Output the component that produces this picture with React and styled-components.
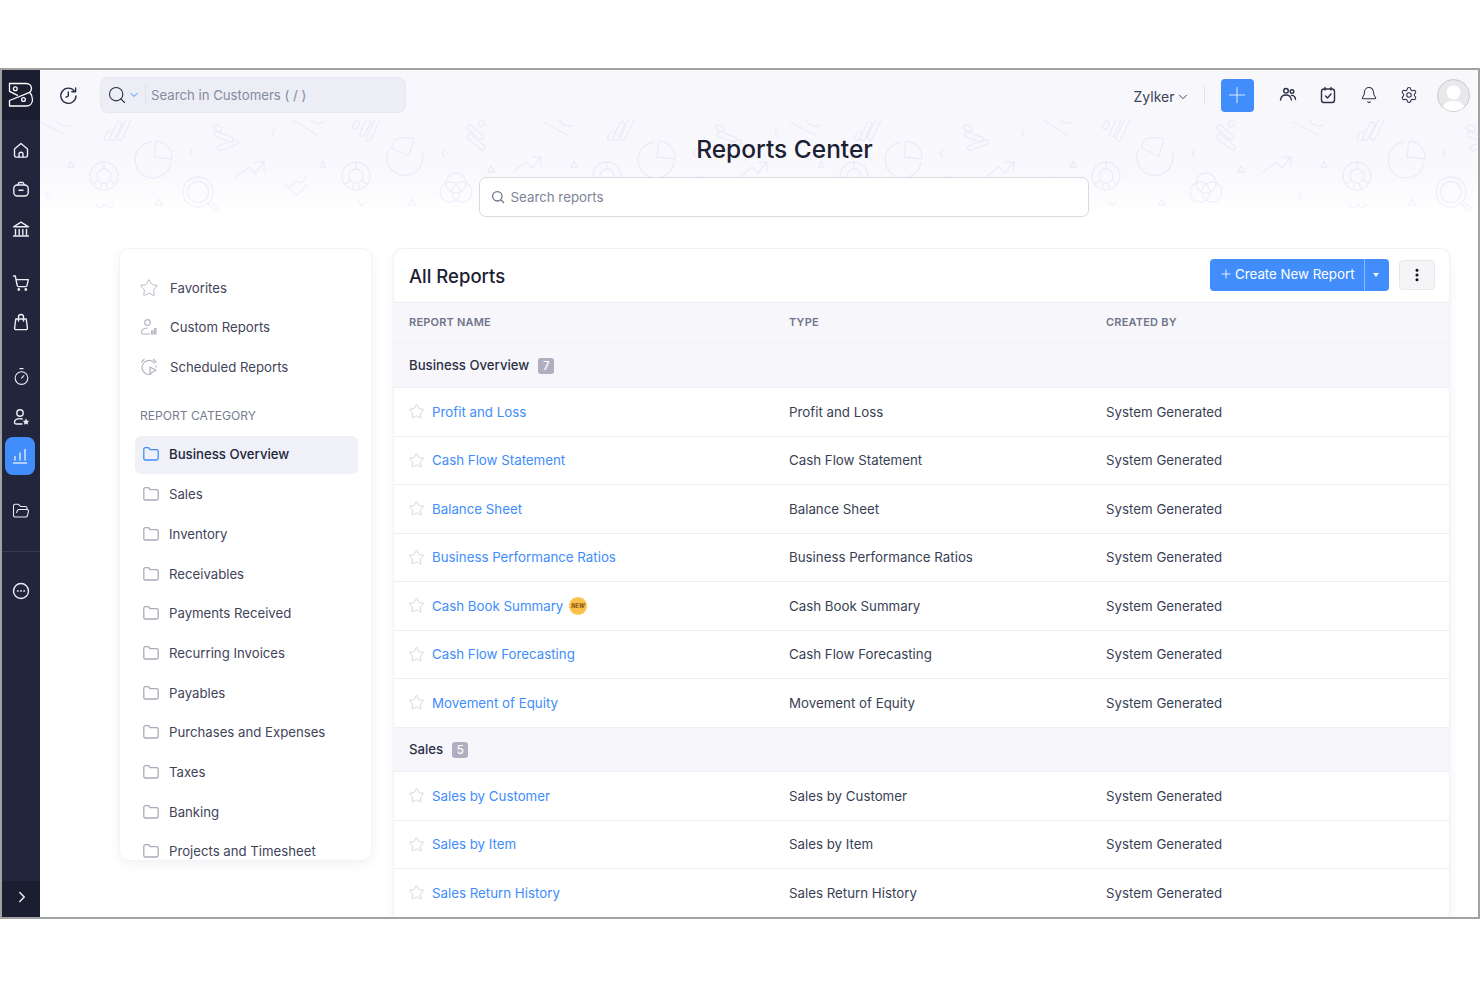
import React from "react";
import styled, { createGlobalStyle } from "styled-components";
import { Timer, FolderOpen, ChevronRight, ChevronDown, Search, Plus, Bell, Settings, Star, EllipsisVertical } from "lucide-react";

const Global = createGlobalStyle`
  html, body { margin: 0; padding: 0; background: #fff; }
  body { font-family: Inter, "Noto Sans", "Liberation Sans", sans-serif; color: #21263c; }
  * { box-sizing: border-box; }
`;

const Frame = styled.div`
  margin-top: 68px; width: 1480px; height: 851px;
  border: 2px solid #a2a2a2;
  display: flex; overflow: hidden; background: #fff;
`;
const Rail = styled.nav`
  width: 38px; flex: none; background: #21263c; display: flex; flex-direction: column; color: #eceef4;
`;
const LogoBlock = styled.div`
  height: 50px; background: #1a1e30; display: flex; align-items: center; justify-content: center; flex: none;
`;
const RailGroup = styled.div`
  display: flex; flex-direction: column; align-items: center; padding-top: ${p => p.$top}px; gap: ${p => p.$gap || 0}px;
`;
const RailItem = styled.div`
  width: ${p => (p.$active ? 30 : 38)}px; height: ${p => (p.$active ? 38 : 39.6)}px; display: flex; align-items: center; justify-content: center;
  ${p => p.$active && "background: #408dfb; border-radius: 8px; margin-left: -2px;"}
`;
const RailDivider = styled.div`
  height: 1px; background: #34394f; margin-top: 20px;
`;
const RailExpand = styled.div`
  margin-top: auto; height: 36px; background: #1a1e30; display: flex; align-items: center; justify-content: center; padding: 0 0 4px 2px;
`;

const Main = styled.div`
  flex: 1; min-width: 0; display: flex; flex-direction: column;
`;
const Topbar = styled.header`
  height: 50px; flex: none; background: #f7f7fc; display: flex; align-items: center; padding-left: 18px; padding-right: 8px;
`;
const IconTool = styled.button`
  width: 20px; height: 20px; padding: 0; border: 0; background: none; color: #2b2f45; display: flex; align-items: center; justify-content: center;
`;
const GlobalSearch = styled.div`
  width: 306px; height: 36px; margin-left: 22px; background: #ecedf5; border: 1px solid #e6e7f1; border-radius: 8px;
  display: flex; align-items: center; padding-left: 6px; color: #2b2f45;
`;
const SearchChevron = styled(ChevronDown)`
  margin-left: 1px; color: #408dfb; flex: none;
`;
const SearchSep = styled.span`
  width: 1px; height: 20px; background: #e0e1ec; margin: 0 5px;
`;
const GlobalPlaceholder = styled.span`
  font-size: 13.2px; color: #858aa0;
`;
const TopRight = styled.div`
  margin-left: auto; display: flex; align-items: center;
`;
const OrgName = styled.span`
  font-size: 14px; color: #3d4257; display: flex; align-items: center; gap: 1px; padding-top: 3px;
`;
const OrgChevron = styled(ChevronDown)`
  color: #2b2f45; flex: none;
`;
const TopSep = styled.span`
  width: 1px; height: 20px; background: #e3e4ee; margin: 0 16px 0 14px;
`;
const AddButton = styled.button`
  width: 33px; height: 33px; background: #408dfb; border: 0; padding: 0; border-radius: 4px; color: #dbe9ff;
  display: flex; align-items: center; justify-content: center; margin-right: 24px;
`;
const ToolRow = styled.div`
  display: flex; align-items: center; gap: 20.5px; margin-right: 18px;
`;
const Avatar = styled.div`
  width: 33px; height: 33px; border-radius: 50%; background: #e9e9ec; border: 1px solid #c9c9cf; overflow: hidden; display: flex;
`;

const Hero = styled.section`
  position: relative; flex: none; height: 128px; padding: 14px 28px 0 79px;
  background: linear-gradient(#f8f8fc 0, #f9f9fd 50px, #fff 98px);
  display: flex; flex-direction: column; align-items: center;
`;
const PatternLayer = styled.svg`
  position: absolute; left: 0; top: 0; width: 100%; height: 100px;
  -webkit-mask-image: linear-gradient(#000 50%, rgba(0,0,0,.45) 100%);
  mask-image: linear-gradient(#000 50%, rgba(0,0,0,.45) 100%);
`;
const Title = styled.h1`
  position: relative; margin: 0; font-size: 24.5px; line-height: 30px; font-weight: 500; color: #1c2033;
`;
const HeroSearch = styled.div`
  position: relative; margin: 13px 2px 0 0; width: 610px; height: 40px; background: #fff; border: 1px solid #d9d9e2; border-radius: 7px;
  display: flex; align-items: center; padding-left: 11px; gap: 6px; font-size: 13.3px; color: #7f8396;
`;

const Content = styled.div`
  flex: 1; min-height: 0; display: flex; align-items: flex-start; gap: 21px; padding: 0 28px 0 79px;
`;
const SideCard = styled.aside`
  width: 253px; height: 613px; flex: none; overflow: hidden; background: #fff; border: 1px solid #f3f3f9; border-radius: 10px;
  box-shadow: 0 3px 12px rgba(40,40,90,.06); padding: 19px 13px 0 15px;
`;
const QuickItem = styled.div`
  height: 39.5px; display: flex; align-items: center; gap: 12px; padding-left: 5px; font-size: 13.2px; color: #3f445a;
`;
const QuickStar = styled(Star)`
  width: 20px; height: 20px; margin: 0 -1px 0 -1px; color: #b3b5c1; flex: none;
`;
const CategoryLabel = styled.div`
  margin-top: 20px; margin-bottom: 11px; padding-left: 5px; font-size: 12.1px; line-height: 18px; color: #777c90;
`;
const CategoryItem = styled.div`
  height: ${p => (p.$active ? "38px" : "39.7px")}; margin-bottom: ${p => (p.$active ? "1.4px" : "0")};
  display: flex; align-items: center; gap: 10px; padding: 0 0 1px 8px; font-size: 13.2px; border-radius: 6px;
  color: ${p => (p.$active ? "#21263c" : "#3f445a")};
  background: ${p => (p.$active ? "#f0f0f8" : "transparent")};
  font-weight: ${p => (p.$active ? 500 : 400)};
  & svg { color: ${p => (p.$active ? "#408dfb" : "#a9abb8")}; flex: none; }
`;

const Panel = styled.section`
  width: 1057px; flex: none; height: 680px; background: #fff; border: 1px solid #f1f1f7; border-bottom: 0; border-radius: 10px 10px 0 0;
  box-shadow: 0 3px 12px rgba(40,40,90,.05); overflow: hidden;
`;
const PanelHead = styled.div`
  height: 54px; display: flex; align-items: center; padding: 0 14px 0 15px; border-bottom: 1px solid #ececf4;
`;
const PanelTitle = styled.h2`
  margin: 0; font-size: 18.5px; font-weight: 500; color: #1c2033;
`;
const PanelActions = styled.div`
  margin-left: auto; display: flex; align-items: center; gap: 10px;
`;
const SplitButton = styled.div`
  height: 32px; width: 179px; display: flex; background: #408dfb; border-radius: 4px; color: #fff; font-size: 13.3px; margin-top: -2px;
`;
const SplitMain = styled.div`
  flex: 1; display: flex; align-items: center; gap: 2px; padding: 0 0 2px 9px; white-space: nowrap;
`;
const SplitCaret = styled.div`
  width: 25px; flex: none; border-left: 1px solid #8dbafc; display: flex; align-items: center; justify-content: center; padding-right: 2px;
`;
const Caret = styled.span`
  width: 0; height: 0; border-left: 3.5px solid transparent; border-right: 3.5px solid transparent; border-top: 4px solid #fff;
`;
const MoreButton = styled.div`
  width: 36px; height: 30px; margin-top: -2px; background: #f5f5f7; border: 1px solid #e7e7ed; border-radius: 4px; display: flex; align-items: center; justify-content: center; color: #111;
`;
const Row = styled.div`
  display: grid; grid-template-columns: 380px 317px 1fr; align-items: center; padding-left: 15px;
`;
const ColumnHead = styled(Row)`
  height: 40px; background: #f7f7fb; border-bottom: 1px solid #f0f0f6; font-size: 11px; font-weight: 600; color: #70758a; letter-spacing: .2px; padding-bottom: 1px;
`;
const GroupRow = styled.div`
  height: ${p => p.$h}px; background: #f7f7fb; border-bottom: 1px solid #efeff5; display: flex; align-items: center; gap: 9px; padding: 0 0 1px 15px; font-size: 13.2px; font-weight: 500; color: #2c3046;
`;
const CountBadge = styled.span`
  width: 16px; height: 16px; border-radius: 3px; background: #afafbf; color: #fff; font-size: 11.5px; font-weight: 500; display: flex; align-items: center; justify-content: center; margin-top: 2px;
`;
const ReportRow = styled(Row)`
  height: 48.5px; border-bottom: 1px solid #eeeef3; font-size: 13.3px; color: #3a3f55;
`;
const NameCell = styled.div`
  display: flex; align-items: center; color: #408dfb; gap: 7px;
  & > svg:first-child { color: #cfcfd6; flex: none; margin-left: -1px; }
`;
const NewMark = styled.svg`
  margin-left: -2px; flex: none;
`;

const LogoIcon = () => (
  <svg width="26" height="26" viewBox="0 0 26 26" fill="none" stroke="#fff" strokeWidth="1.3" strokeLinejoin="round" strokeLinecap="round">
    <path d="M1.5 1.500H18c3.500 0 5.500 2.300 5.500 5 0 1.700-.8 3-1.800 3.800L1.500 18.500v5.500H18c4 0 6.500-2.700 6.500-6.300 0-3.200-1.200-5.600-2.800-7.400" />
    <path d="M1.500 1.500V9.300l8 4" />
    <circle cx="7.300" cy="6.800" r="1.900" />
    <circle cx="15.500" cy="17.500" r="1.900" />
  </svg>
);
const iconProps = { width: 18, height: 18, viewBox: "0 0 18 18", fill: "none", stroke: "currentColor", strokeWidth: 1.4, strokeLinecap: "round", strokeLinejoin: "round" };
const HomeIcon = () => (
  <svg {...iconProps}>
    <path d="M2.500 8 9 2.500 15.500 8v6.300c0 1.100-.7 1.800-1.700 1.800H4.200c-1 0-1.700-.7-1.700-1.800z" />
    <path d="M7 16v-2.800a2 2 0 0 1 4 0V16" />
  </svg>
);
const BagMinus = () => (
  <svg {...iconProps}>
    <path d="M5.500 5 7 2.500h4L12.500 5" />
    <rect x="1.800" y="5" width="14.400" height="11" rx="3.500" />
    <path d="M7 10.200h4" />
  </svg>
);
const BankIcon = () => (
  <svg {...iconProps}>
    <path d="M1.500 6.800 9 2.200l7.500 4.600z" />
    <path d="M3.500 9.500v5M7.200 9.500v5M10.800 9.500v5M14.500 9.500v5M1.500 16h15" />
  </svg>
);
const CartIcon = () => (
  <svg {...iconProps}>
    <path d="M1.500 2h1.800l1.900 9.500c.1.700.7 1.100 1.300 1.100h7.200c.6 0 1.100-.4 1.300-1l1.300-6H4" />
    <circle cx="6.800" cy="15.500" r=".7" />
    <circle cx="13.800" cy="15.500" r=".7" />
  </svg>
);
const ShopBag = () => (
  <svg {...iconProps}>
    <path d="M3.800 6h10.400l1.200 9c.1 1-.6 1.600-1.500 1.600H4.100c-.9 0-1.600-.6-1.500-1.600z" />
    <path d="M6.500 8V4a2.500 2.500 0 0 1 5 0v4" />
  </svg>
);
const UserStar = () => (
  <svg {...iconProps}>
    <circle cx="8" cy="5" r="3.200" />
    <path d="M10 16H4.500c-1.500 0-2.200-1-2-2.200.4-2 2.400-3.200 5.200-3.200 1 0 1.800.1 2.500.4" />
    <path d="m14 11.200.9 1.700 1.800.3-1.300 1.200.3 1.800-1.700-.8-1.700.8.3-1.800-1.300-1.200 1.800-.3z" fill="currentColor" strokeWidth=".6" />
  </svg>
);
const MoreCircle = () => (
  <svg {...iconProps}>
    <circle cx="9" cy="9" r="7.500" />
    <circle cx="5.800" cy="9" r=".3" />
    <circle cx="9" cy="9" r=".3" />
    <circle cx="12.200" cy="9" r=".3" />
  </svg>
);
const Bars = () => (
  <svg width="18" height="18" viewBox="0 0 18 18" fill="none" stroke="#d6e6ff" strokeWidth="1.5" strokeLinecap="round">
    <path d="M4 13V9.500M9 13V6M14 13V2.500M2.500 16h13" />
  </svg>
);
const HistoryIcon = () => (
  <svg width="19" height="19" viewBox="0 0 19 19" fill="none" stroke="currentColor" strokeWidth="1.400" strokeLinecap="round" strokeLinejoin="round">
    <path d="M15.500 5.200A7.600 7.600 0 1 0 17 10" />
    <path d="M16.600 2v3.800h-3.800" />
    <path d="M9.300 6v4l-2.200 1.200" />
  </svg>
);
const UsersIcon = () => (
  <svg {...iconProps}>
    <circle cx="7" cy="4.800" r="2.300" />
    <circle cx="13" cy="5.600" r="1.800" />
    <path d="M1.500 14c.3-3 2.600-5 5.500-5s5 2 5.400 5" />
    <path d="M12.500 9.400c2.200 0 3.800 1.600 4 4" />
  </svg>
);
const TaskIcon = () => (
  <svg {...iconProps}>
    <rect x="2.500" y="3" width="13" height="13.500" rx="2.500" />
    <path d="M6 1.500V4M12 1.500V4M6.500 10l2 2 3.500-4" />
  </svg>
);
const AvatarFigure = () => (
  <svg width="31" height="31" viewBox="0 0 31 31">
    <circle cx="15.500" cy="12.500" r="7" fill="#fff" />
    <path d="M4 31c0-7 5-10 11.500-10S27 24 27 31z" fill="#fff" />
  </svg>
);
const SmallSearch = () => (
  <svg width="14" height="14" viewBox="0 0 14 14" fill="none" stroke="#6f7388" strokeWidth="1.300" strokeLinecap="round">
    <circle cx="6.300" cy="6.300" r="4.700" />
    <path d="m10 10 2.500 2.500" />
  </svg>
);
const CustomReportIcon = () => (
  <svg width="18" height="18" viewBox="0 0 18 18" fill="none" stroke="#b3b5c1" strokeWidth="1.200" strokeLinecap="round" strokeLinejoin="round">
    <circle cx="7.500" cy="4.500" r="2.800" />
    <path d="M9.500 16H3c-1 0-1.500-.6-1.500-1.500 0-2.500 2.500-4.500 6-4.500" />
    <path d="M11.500 16v-2.500c0-1 1.500-1 1.500 0V16zM14.500 16V11c0-1 1.500-1 1.500 0v5z" />
  </svg>
);
const ScheduleIcon = () => (
  <svg width="18" height="18" viewBox="0 0 18 18" fill="none" stroke="#b3b5c1" strokeWidth="1.200" strokeLinecap="round" strokeLinejoin="round">
    <path d="M11 16.200A7 7 0 1 1 16 9" strokeDasharray="30 3" />
    <path d="M1.500 4 4 1.500M13.500 1.500 16 4" />
    <path d="M10 9v6.500l6-3.200z" />
  </svg>
);
const FolderGlyph = () => (
  <svg width="16" height="16" viewBox="0 0 16 16" fill="none" stroke="currentColor" strokeWidth="1.300" strokeLinejoin="round">
    <path d="M.8 3.200c0-.9.6-1.500 1.500-1.500h3.200l1.800 2h6.400c.9 0 1.500.6 1.500 1.500v7.300c0 .9-.6 1.500-1.500 1.500H2.300c-.9 0-1.500-.6-1.500-1.500z" />
  </svg>
);
const burst = Array.from({ length: 32 }, (_, i) => {
  const r = i % 2 ? 9.500 : 8.300;
  const a = (i / 32) * Math.PI * 2;
  return `${(10 + r * Math.cos(a)).toFixed(2)},${(10 + r * Math.sin(a)).toFixed(2)}`;
}).join(" ");
const NewBadge = () => (
  <NewMark width="20" height="20" viewBox="0 0 20 20">
    <polygon points={burst} fill="#fac14a" />
    <text x="10" y="12" textAnchor="middle" fontSize="5.500" fontWeight="800" fontStyle="italic" fill="#8d5a1c" fontFamily="Inter, sans-serif">NEW</text>
  </NewMark>
);

const Unit1 = () => (
  <>
    <path d="M40 122l25 13M57 120c1 5 8 8 13 5" />
    <rect x="-2.500" y="-5" width="5" height="10" rx="2.500" transform="translate(108 136) rotate(25)" />
    <rect x="-2.500" y="-10" width="5" height="20" rx="2.500" transform="translate(116 131) rotate(25)" />
    <rect x="-2.500" y="-12" width="5" height="24" rx="2.500" transform="translate(124 129) rotate(25)" />
    <path d="M151 142a18 18 0 1 0 20 20" />
    <path d="M156 141a17 17 0 0 1 16 18l-18-2z" />
    <path d="M193 149a4.500 4.500 0 0 0 0 8" />
    <rect x="-4" y="-2.500" width="9" height="5" rx="2.500" transform="translate(217 128) rotate(20)" />
    <rect x="-10" y="-2.500" width="20" height="5" rx="2.500" transform="translate(224 137) rotate(20)" />
    <rect x="-11" y="-2.500" width="22" height="5" rx="2.500" transform="translate(228 145) rotate(-20)" />
    <path d="M275 129a4.500 4.500 0 0 0 0 8" />
    <path d="M71 161l3 6h-6z" />
    <circle cx="104" cy="176" r="14" />
    <circle cx="104" cy="176" r="7" />
    <path d="M104 162v7M93 184l5-4M115 184l-5-4M100 189l2-6M108 189l-2-6" />
    <circle cx="198" cy="192" r="15" />
    <circle cx="198" cy="192" r="10.500" />
    <path d="M208 203l6 7c3 3 6-1 3-3l-7-6" />
    <path d="M236 177l13-10 6 6 8-10M255 162h9v9" />
    <path d="M159 199l3.500 6h-7z" />
    <path d="M97 204c0 5 6 5 7 0M106 204c0 5 6 5 7 0" />
    <path d="M49 191a4.500 4.500 0 0 0 0 8" />
  </>
);
const Unit2 = () => (
  <>
    <path d="M293 120l24 15M310 117c1 5 8 8 13 5" />
    <rect x="-2.500" y="-4.500" width="5" height="9" rx="2.500" transform="translate(356 125) rotate(25)" />
    <rect x="-2.500" y="-9" width="5" height="18" rx="2.500" transform="translate(365 128) rotate(25)" />
    <rect x="-2.500" y="-13" width="5" height="26" rx="2.500" transform="translate(373 129) rotate(25)" />
    <path d="M388 151a18 18 0 1 0 34 1" />
    <path d="M391 148l4-9c5-2 15-2 19 0l-5 17z" />
    <path d="M445 149a4.500 4.500 0 0 0 0 8" />
    <rect x="-3" y="-2.500" width="7" height="5" rx="2.500" transform="translate(481 124) rotate(-40)" />
    <rect x="-10" y="-2.500" width="20" height="5" rx="2.500" transform="translate(475 132) rotate(40)" />
    <rect x="-11" y="-2.500" width="22" height="5" rx="2.500" transform="translate(476 142) rotate(40)" />
    <path d="M323 161l3 6h-6z" />
    <circle cx="356" cy="176" r="14" />
    <circle cx="356" cy="176" r="7" />
    <path d="M356 162v7M345 184l5-4M367 184l-5-4M352 189l2-6M360 189l-2-6" />
    <path d="M285 185l12 10 10-10M288 186c6 2 5-6 10-4s5-1 7-5" />
    <circle cx="456" cy="183" r="10" />
    <circle cx="450" cy="192" r="10" />
    <circle cx="462" cy="192" r="10" />
    <path d="M491 166l3.500 6h-7z" />
    <path d="M513 172l13-10 6 6 8-10M532 157h9v9" />
    <path d="M359 201c1 5 5 6 7 1" />
    <path d="M412 199l3.500 6h-7z" />
  </>
);

const PatternArt = () => (
  <PatternLayer aria-hidden="true">
    <defs>
      <pattern id="heroTile" x="0" y="0" width="750" height="100" patternUnits="userSpaceOnUse">
        <g transform="translate(-40 -120)" fill="none" stroke="#ebebf9" strokeWidth="1.300" strokeLinecap="round" strokeLinejoin="round">
          <Unit1 />
          <Unit2 />
          <g transform="translate(503 0)"><Unit1 /></g>
        </g>
      </pattern>
    </defs>
    <rect width="100%" height="100" fill="url(#heroTile)" />
  </PatternLayer>
);

const sys = "System Generated";
const overview = ["Profit and Loss", "Cash Flow Statement", "Balance Sheet", "Business Performance Ratios", "Cash Book Summary", "Cash Flow Forecasting", "Movement of Equity"];
const sales = ["Sales by Customer", "Sales by Item", "Sales Return History"];
const categories = ["Business Overview", "Sales", "Inventory", "Receivables", "Payments Received", "Recurring Invoices", "Payables", "Purchases and Expenses", "Taxes", "Banking", "Projects and Timesheet"];

const Report = ({ name }) => (
  <ReportRow>
    <NameCell>
      <Star size={17} strokeWidth={1.2} />
      <span>{name}</span>
      {name === "Cash Book Summary" && <NewBadge />}
    </NameCell>
    <div>{name}</div>
    <div>{sys}</div>
  </ReportRow>
);

export default function App() {
  return (
    <>
      <Global />
      <Frame>
        <Rail>
          <LogoBlock><LogoIcon /></LogoBlock>
          <RailGroup $top={10}>
            <RailItem><HomeIcon /></RailItem>
            <RailItem><BagMinus /></RailItem>
            <RailItem><BankIcon /></RailItem>
          </RailGroup>
          <RailGroup $top={14}>
            <RailItem><CartIcon /></RailItem>
            <RailItem><ShopBag /></RailItem>
          </RailGroup>
          <RailGroup $top={15} $gap={0.6}>
            <RailItem><Timer size={19} strokeWidth={1.4} /></RailItem>
            <RailItem><UserStar /></RailItem>
            <RailItem $active><Bars /></RailItem>
          </RailGroup>
          <RailGroup $top={16}>
            <RailItem><FolderOpen size={18} strokeWidth={1.4} /></RailItem>
          </RailGroup>
          <RailDivider />
          <RailGroup $top={19}>
            <RailItem><MoreCircle /></RailItem>
          </RailGroup>
          <RailExpand><ChevronRight size={18} strokeWidth={2} /></RailExpand>
        </Rail>
        <Main>
          <Topbar>
            <IconTool><HistoryIcon /></IconTool>
            <GlobalSearch>
              <Search size={20} strokeWidth={1.3} />
              <SearchChevron size={12} />
              <SearchSep />
              <GlobalPlaceholder>Search in Customers ( / )</GlobalPlaceholder>
            </GlobalSearch>
            <TopRight>
              <OrgName>Zylker <OrgChevron size={14} strokeWidth={1.5} /></OrgName>
              <TopSep />
              <AddButton><Plus size={26} strokeWidth={1} /></AddButton>
              <ToolRow>
                <IconTool><UsersIcon /></IconTool>
                <IconTool><TaskIcon /></IconTool>
                <IconTool><Bell size={18} strokeWidth={1.4} /></IconTool>
                <IconTool><Settings size={18} strokeWidth={1.4} /></IconTool>
              </ToolRow>
              <Avatar><AvatarFigure /></Avatar>
            </TopRight>
          </Topbar>
          <Hero>
            <PatternArt />
            <Title>Reports Center</Title>
            <HeroSearch><SmallSearch />Search reports</HeroSearch>
          </Hero>
          <Content>
            <SideCard>
              <QuickItem><QuickStar strokeWidth={1.1} />Favorites</QuickItem>
              <QuickItem><CustomReportIcon />Custom Reports</QuickItem>
              <QuickItem><ScheduleIcon />Scheduled Reports</QuickItem>
              <CategoryLabel>REPORT CATEGORY</CategoryLabel>
              {categories.map((c, i) => (
                <CategoryItem key={c} $active={i === 0}><FolderGlyph />{c}</CategoryItem>
              ))}
            </SideCard>
            <Panel>
              <PanelHead>
                <PanelTitle>All Reports</PanelTitle>
                <PanelActions>
                  <SplitButton>
                    <SplitMain><Plus size={14} strokeWidth={1.5} />Create New Report</SplitMain>
                    <SplitCaret><Caret /></SplitCaret>
                  </SplitButton>
                  <MoreButton><EllipsisVertical size={16} strokeWidth={2.6} /></MoreButton>
                </PanelActions>
              </PanelHead>
              <ColumnHead>
                <span>REPORT NAME</span>
                <span>TYPE</span>
                <span>CREATED BY</span>
              </ColumnHead>
              <GroupRow $h={45.2}>Business Overview <CountBadge>7</CountBadge></GroupRow>
              {overview.map(n => <Report key={n} name={n} />)}
              <GroupRow $h={44.5}>Sales <CountBadge>5</CountBadge></GroupRow>
              {sales.map(n => <Report key={n} name={n} />)}
            </Panel>
          </Content>
        </Main>
      </Frame>
    </>
  );
}
